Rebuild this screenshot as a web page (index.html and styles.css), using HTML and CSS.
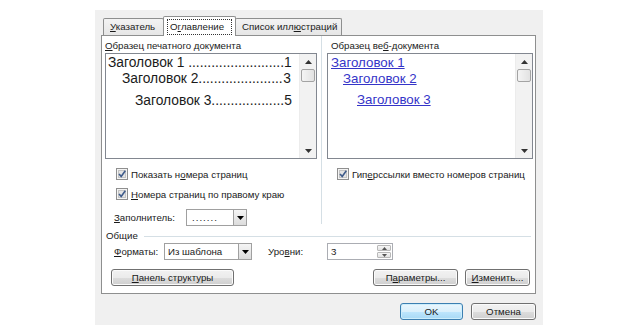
FILE: index.html
```html
<!DOCTYPE html>
<html lang="ru">
<head>
    <meta charset="UTF-8">
    <title>Оглавление</title>
    <link rel="stylesheet" href="styles.css">
</head>
<body>
    <div class="dialog">
        <div class="tabs">
            <div class="tab"><u>У</u>казатель</div>
            <div class="tab active"><span class="focus">О<u>г</u>лавление</span></div>
            <div class="tab">Список илл<u>ю</u>страций</div>
        </div>
        <div class="panel">
            <div class="top">
                <div class="col-left">
                    <div class="label"><u>О</u>бразец печатного документа</div>
                    <div class="preview">
                        <div class="preview-body">
                            <div class="toc-line lvl1"><span>Заголовок 1 .........................</span><span>1</span></div>
                            <div class="toc-line lvl2"><span>Заголовок 2......................</span><span>3</span></div>
                            <div class="toc-line lvl3"><span>Заголовок 3...................</span><span>5</span></div>
                        </div>
                        <div class="scrollbar">
                            <div class="sb-arrow"><svg width="7" height="4" viewBox="0 0 7 4"><path d="M0 4 L3.5 0 L7 4 Z" fill="#333"/></svg></div>
                            <div class="sb-thumb"></div>
                            <div class="sb-track"></div>
                            <div class="sb-arrow"><svg width="7" height="4" viewBox="0 0 7 4"><path d="M0 0 L3.5 4 L7 0 Z" fill="#333"/></svg></div>
                        </div>
                    </div>
                    <div class="check-row first">
                        <span class="check"><svg width="12" height="12" viewBox="0 0 12 12"><rect x="0.5" y="0.5" width="11" height="11" fill="#f4f4f4" stroke="#8f8f8f"/><rect x="2.5" y="2.5" width="7" height="7" fill="#e4e4e4" stroke="#c4c4c4"/><path d="M3 6 L5.2 8.4 L9.3 2.8" fill="none" stroke="#3e5b8a" stroke-width="1.6"/></svg></span>
                        <span>Показать н<u>о</u>мера страниц</span>
                    </div>
                    <div class="check-row">
                        <span class="check"><svg width="12" height="12" viewBox="0 0 12 12"><rect x="0.5" y="0.5" width="11" height="11" fill="#f4f4f4" stroke="#8f8f8f"/><rect x="2.5" y="2.5" width="7" height="7" fill="#e4e4e4" stroke="#c4c4c4"/><path d="M3 6 L5.2 8.4 L9.3 2.8" fill="none" stroke="#3e5b8a" stroke-width="1.6"/></svg></span>
                        <span><u>Н</u>омера страниц по правому краю</span>
                    </div>
                    <div class="field-row">
                        <span class="field-label fill-label"><u>З</u>аполнитель:</span>
                        <div class="combo fill-combo">
                            <span class="combo-text">.......</span>
                            <span class="combo-btn"><svg width="7" height="4" viewBox="0 0 7 4"><path d="M0 0 L3.5 4 L7 0 Z" fill="#000"/></svg></span>
                        </div>
                    </div>
                </div>
                <div class="col-right">
                    <div class="label web-label">Образец ве<u>б</u>-документа</div>
                    <div class="preview web">
                        <div class="preview-body">
                            <div class="web-line lvl1"><a>Заголовок 1</a></div>
                            <div class="web-line lvl2"><a>Заголовок 2</a></div>
                            <div class="web-line lvl3"><a>Заголовок 3</a></div>
                        </div>
                        <div class="scrollbar">
                            <div class="sb-arrow"><svg width="7" height="4" viewBox="0 0 7 4"><path d="M0 4 L3.5 0 L7 4 Z" fill="#333"/></svg></div>
                            <div class="sb-thumb"></div>
                            <div class="sb-track"></div>
                            <div class="sb-arrow"><svg width="7" height="4" viewBox="0 0 7 4"><path d="M0 0 L3.5 4 L7 0 Z" fill="#333"/></svg></div>
                        </div>
                    </div>
                    <div class="check-row first web-check">
                        <span class="check"><svg width="12" height="12" viewBox="0 0 12 12"><rect x="0.5" y="0.5" width="11" height="11" fill="#f4f4f4" stroke="#8f8f8f"/><rect x="2.5" y="2.5" width="7" height="7" fill="#e4e4e4" stroke="#c4c4c4"/><path d="M3 6 L5.2 8.4 L9.3 2.8" fill="none" stroke="#3e5b8a" stroke-width="1.6"/></svg></span>
                        <span>Гип<u>е</u>рссылки вместо номеров страниц</span>
                    </div>
                </div>
            </div>
            <div class="group-title"><span>Общие</span><span class="group-line"></span></div>
            <div class="field-row formats">
                <span class="field-label fmt-label"><u>Ф</u>орматы:</span>
                <div class="combo fmt-combo">
                    <span class="combo-text">Из шаблона</span>
                    <span class="combo-btn"><svg width="7" height="4" viewBox="0 0 7 4"><path d="M0 0 L3.5 4 L7 0 Z" fill="#000"/></svg></span>
                </div>
                <span class="field-label lvl-label">Уро<u>в</u>ни:</span>
                <div class="spin">
                    <span class="spin-text">3</span>
                    <span class="spin-btns">
                        <span class="spin-btn"><svg width="5" height="3" viewBox="0 0 5 3"><path d="M0 3 L2.5 0 L5 3 Z" fill="#555"/></svg></span>
                        <span class="spin-btn"><svg width="5" height="3" viewBox="0 0 5 3"><path d="M0 0 L2.5 3 L5 0 Z" fill="#555"/></svg></span>
                    </span>
                </div>
            </div>
            <div class="button-row">
                <button class="btn outline-btn"><u>П</u>анель структуры</button>
                <span class="spacer"></span>
                <button class="btn params-btn">П<u>а</u>раметры...</button>
                <button class="btn change-btn"><u>И</u>зменить...</button>
            </div>
        </div>
        <div class="footer">
            <button class="btn ok-btn">OK</button>
            <button class="btn cancel-btn">Отмена</button>
        </div>
    </div>
</body>
</html>
```

FILE: styles.css
```css
html, body {
    margin: 0;
    padding: 0;
    background: #fff;
    font-family: 'Liberation Sans', Arial, sans-serif;
    font-size: 9.7px;
    color: #1a1a1a;
}
u {
    text-decoration: underline;
    text-underline-offset: 1px;
}
.dialog {
    width: 448px;
    height: 315px;
    margin: 10px 0 0 95px;
    padding: 6px 0 0 6px;
    box-sizing: border-box;
    background: #f0f0f0;
    white-space: nowrap;
}
.tabs {
    display: flex;
    align-items: flex-end;
    height: 19px;
    margin-left: 2px;
}
.tab {
    height: 17px;
    line-height: 16px;
    box-sizing: border-box;
    padding: 0 6px;
    border: 1px solid #8e8f8f;
    border-bottom: none;
    margin-right: -1px;
    border-radius: 2px 2px 0 0;
    background: linear-gradient(#f3f3f3, #e6e6e6);
}
.tab:nth-child(1) { width: 61px; }
.tab:nth-child(3) { width: 107px; }
.tab.active {
    width: 73px;
    height: 20px;
    margin-bottom: -1px;
    padding: 2px 3px 0;
    background: #fff;
    position: relative;
    z-index: 1;
}
.focus {
    display: block;
    line-height: 14px;
    border: 1px dotted #333;
    padding: 0 2px;
}
.panel {
    width: 435px;
    height: 259px;
    box-sizing: border-box;
    border: 1px solid #8e8f8f;
    background: #fff;
}
.top {
    display: flex;
    height: 188px;
}
.col-left {
    flex: none;
    width: 220px;
    box-sizing: border-box;
    border-right: 1px solid #d5dfe5;
    padding: 3px 0 0 3px;
}
.col-right {
    flex: 1;
    min-width: 0;
    padding: 3px 0 0 5px;
}
.label {
    height: 14px;
    line-height: 14px;
}
.web-label {
    padding-left: 4px;
}
.preview {
    display: flex;
    width: 212px;
    height: 106px;
    box-sizing: border-box;
    border: 1px solid #828790;
    background: #fff;
}
.preview.web {
    width: 206px;
}
.preview-body {
    flex: 1;
    min-width: 0;
    padding: 1px 8px 0 2px;
}
.toc-line {
    display: flex;
    justify-content: space-between;
    height: 16px;
    line-height: 16px;
    font-size: 13.8px;
}
.lvl2 { padding-left: 14px; }
.lvl3 { padding-left: 27px; margin-top: 6px; }
.web .preview-body {
    padding-left: 3px;
}
.web-line {
    height: 16px;
    line-height: 16px;
    font-size: 13.3px;
}
.web-line a {
    color: #3434c8;
    text-decoration: underline;
}
.web-line.lvl2 { padding-left: 12px; }
.web-line.lvl3 { padding-left: 26px; margin-top: 5px; }
.scrollbar {
    width: 16px;
    display: flex;
    flex-direction: column;
    background: #f2f2f2;
    border-left: 1px solid #ececec;
}
.sb-arrow {
    height: 15px;
    display: flex;
    align-items: center;
    justify-content: center;
}
.sb-thumb {
    height: 13px;
    margin: 0 1px;
    box-sizing: border-box;
    border: 1px solid #a3a3a3;
    border-radius: 2px;
    background: linear-gradient(90deg, #f4f4f4, #e2e2e2);
}
.sb-track {
    flex: 1;
}
.check-row {
    display: flex;
    align-items: center;
    height: 20px;
    margin-left: 11px;
}
.check-row.first {
    margin-top: 5px;
}
.check {
    display: flex;
    width: 12px;
    height: 12px;
    margin-right: 3px;
}
.web-check {
    margin-left: 10px;
}
.field-row {
    display: flex;
    align-items: center;
    height: 17px;
    margin-top: 5px;
}
.field-label {
    flex: none;
}
.fill-label {
    width: 72px;
    margin-left: 9px;
}
.combo {
    display: flex;
    height: 17px;
    box-sizing: border-box;
    border: 1px solid #a0a0a0;
    background: #fff;
}
.combo-text {
    flex: 1;
    line-height: 15px;
    padding-left: 3px;
}
.combo-btn {
    width: 12px;
    display: flex;
    align-items: center;
    justify-content: center;
    border-left: 1px solid #a0a0a0;
    background: linear-gradient(#f5f5f5, #dcdcdc);
}
.fill-combo {
    width: 61px;
}
.fill-combo .combo-text {
    letter-spacing: 1px;
    padding-left: 5px;
}
.group-title {
    display: flex;
    align-items: center;
    height: 14px;
    line-height: 14px;
    margin: 5px 4px 0 4px;
}
.group-line {
    flex: 1;
    margin-left: 6px;
    border-top: 1px solid #d5dfe5;
}
.formats {
    margin-top: 0;
    height: 17px;
}
.fmt-label {
    width: 50px;
    margin-left: 12px;
}
.fmt-combo {
    width: 88px;
}
.lvl-label {
    width: 59px;
    margin-left: 16px;
}
.spin {
    display: flex;
    width: 66px;
    height: 17px;
    box-sizing: border-box;
    border: 1px solid #abadb3;
    background: #fff;
}
.spin-text {
    flex: 1;
    line-height: 15px;
    padding-left: 3px;
}
.spin-btns {
    width: 14px;
    display: flex;
    flex-direction: column;
    padding: 1px;
    gap: 1px;
}
.spin-btn {
    flex: 1;
    display: flex;
    align-items: center;
    justify-content: center;
    border: 1px solid #b8b8b8;
    border-radius: 1px;
    background: linear-gradient(#f6f6f6, #e2e2e2);
}
.button-row {
    display: flex;
    margin: 9px 5px 0 9px;
}
.spacer {
    flex: 1;
}
.btn {
    height: 17px;
    padding: 0;
    box-sizing: border-box;
    border: 1px solid #707070;
    border-radius: 3px;
    background: linear-gradient(#f2f2f2 0%, #ebebeb 50%, #dddddd 51%, #cfcfcf 100%);
    box-shadow: inset 0 0 0 1px #fbfbfb;
    font-family: inherit;
    font-size: 9.7px;
    line-height: 15px;
    color: #1a1a1a;
}
.outline-btn { width: 123px; }
.params-btn { width: 85px; margin-right: 7px; }
.change-btn { width: 65px; }
.footer {
    display: flex;
    justify-content: flex-end;
    gap: 8px;
    margin: 9px 7px 0 0;
}
.ok-btn {
    width: 63px;
    border-color: #3c7fb1;
    background: linear-gradient(#eaf6fd 0%, #d9f0fc 50%, #bee6fd 51%, #a7d9f5 100%);
    box-shadow: inset 0 0 0 1px #cdeefc;
}
.cancel-btn { width: 65px; }
```
